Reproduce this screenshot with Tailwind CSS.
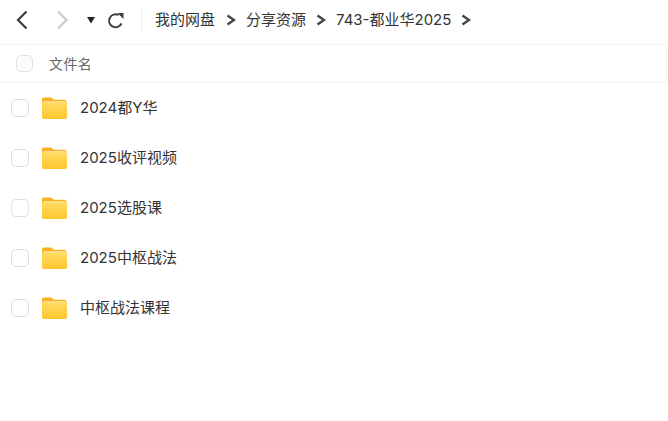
<!DOCTYPE html>
<html lang="zh">
<head>
<meta charset="utf-8">
<script src="https://cdn.jsdelivr.net/npm/@tailwindcss/browser@4"></script>
</head>
<body class="bg-white overflow-hidden font-['Inter','Noto_Sans_CJK_SC',sans-serif] text-[15px] text-[#333333]">
<svg class="absolute w-0 h-0" aria-hidden="true">
  <defs>
    <linearGradient id="front" x1="0" y1="0" x2="0" y2="1"><stop offset="0" stop-color="#ffdc62"/><stop offset="1" stop-color="#ffc62e"/></linearGradient>
    <symbol id="folder" viewBox="0 0 26 24">
      <path d="M0 3a2 2 0 0 1 2-2h7.500l3 2.500H23.500a2 2 0 0 1 2 2V12H0z" fill="#fbb024"/>
      <path d="M1.500 5h23v5h-23z" fill="#ffeeb8"/>
      <path d="M0 7.500a2 2 0 0 1 2-1.500h22a2 2 0 0 1 2 1.500V21.500a2 2 0 0 1-2 2H2a2 2 0 0 1-2-2z" fill="url(#front)"/>
    </symbol>
  </defs>
</svg>
<div class="w-[668px] h-[421px] flex flex-col">
  <header class="h-[45px] pb-[4px] flex items-center border-b border-[#f4f4f4] shrink-0">
    <svg class="ml-[15px] w-[14px] h-[20px]" viewBox="0 0 14 20" fill="none" stroke="#3b3f46" stroke-width="2.200"><path d="M11.500 1.500 3 10l8.500 8.500"/></svg>
    <svg class="ml-[26px] w-[14px] h-[20px]" viewBox="0 0 14 20" fill="none" stroke="#c9ccd0" stroke-width="2.200"><path d="M3 1.500 11.500 10 3 18.500"/></svg>
    <svg class="ml-[17px] w-[10px] h-[8px]" viewBox="0 0 10 8" fill="#22252b"><path d="M1 1h8L5 7.500z"/></svg>
    <svg class="ml-[11px] w-[17px] h-[17px]" viewBox="0 0 17 17" fill="none" stroke="#3b3f46" stroke-width="2"><path d="M14.500 11.500A6.500 6.500 0 1 1 11.500 3"/><path d="M10.500 1h6v6z" fill="#3b3f46" stroke="none"/></svg>
    <div class="ml-[17px] w-px h-[24px] bg-[#eeeeee]"></div>
    <nav class="ml-[13px] flex items-center">
      <span>我的网盘</span>
      <svg class="ml-[11px] w-[10px] h-[12px]" viewBox="0 0 10 12" fill="none" stroke="#3f444b" stroke-width="2.400"><path d="M1.500 1.500 8 6l-6.500 4.500"/></svg>
      <span class="ml-[10px]">分享资源</span>
      <svg class="ml-[10px] w-[10px] h-[12px]" viewBox="0 0 10 12" fill="none" stroke="#3f444b" stroke-width="2.400"><path d="M1.500 1.500 8 6l-6.500 4.500"/></svg>
      <span class="ml-[10px]">743-都业华2025</span>
      <svg class="ml-[10px] w-[10px] h-[12px]" viewBox="0 0 10 12" fill="none" stroke="#3f444b" stroke-width="2.400"><path d="M1.500 1.500 8 6l-6.500 4.500"/></svg>
    </nav>
  </header>
  <div class="w-[667px] h-[38px] flex items-center border-b border-r border-[#f3f3f3] shrink-0 text-[#666666] text-[14px]">
    <span class="ml-[16px] w-[17px] h-[17px] rounded-[5px] border border-[#e0e3e6] bg-[#fbfbfb]"></span>
    <span class="ml-[16px] tracking-[0.4px]">文件名</span>
  </div>
  <ul class="flex flex-col">
    <li class="h-[50px] flex items-center">
      <span class="ml-[11px] w-[18px] h-[18px] rounded-[5px] border border-[#d8dfe6]"></span>
      <svg class="ml-[13px] w-[25px] h-[24px]"><use href="#folder"/></svg>
      <span class="ml-[13px]">2024都Y华</span>
    </li>
    <li class="h-[50px] flex items-center">
      <span class="ml-[11px] w-[18px] h-[18px] rounded-[5px] border border-[#d8dfe6]"></span>
      <svg class="ml-[13px] w-[25px] h-[24px]"><use href="#folder"/></svg>
      <span class="ml-[13px]">2025收评视频</span>
    </li>
    <li class="h-[50px] flex items-center">
      <span class="ml-[11px] w-[18px] h-[18px] rounded-[5px] border border-[#d8dfe6]"></span>
      <svg class="ml-[13px] w-[25px] h-[24px]"><use href="#folder"/></svg>
      <span class="ml-[13px]">2025选股课</span>
    </li>
    <li class="h-[50px] flex items-center">
      <span class="ml-[11px] w-[18px] h-[18px] rounded-[5px] border border-[#d8dfe6]"></span>
      <svg class="ml-[13px] w-[25px] h-[24px]"><use href="#folder"/></svg>
      <span class="ml-[13px]">2025中枢战法</span>
    </li>
    <li class="h-[50px] flex items-center">
      <span class="ml-[11px] w-[18px] h-[18px] rounded-[5px] border border-[#d8dfe6]"></span>
      <svg class="ml-[13px] w-[25px] h-[24px]"><use href="#folder"/></svg>
      <span class="ml-[13px]">中枢战法课程</span>
    </li>
  </ul>
</div>
</body>
</html>
